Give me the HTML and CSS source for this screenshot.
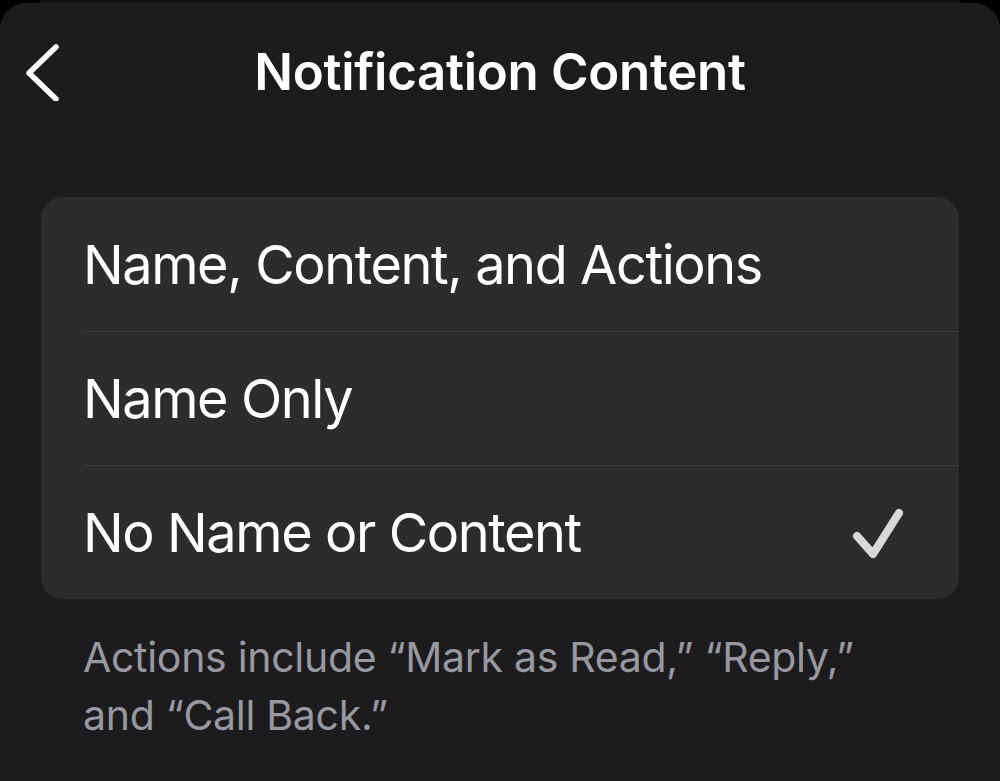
FILE: index.html
```html
<!DOCTYPE html>
<html lang="en">
<head>
    <meta charset="UTF-8">
    <meta name="viewport" content="width=device-width, initial-scale=1.0">
    <title>Notification Content</title>
    <link rel="stylesheet" href="styles.css">
</head>
<body>
    <div class="stack"></div>
    <div class="sheet">
        <div class="header">
            <button class="back" aria-label="Back">
                <svg width="40" height="60" viewBox="0 0 40 60">
                    <path d="M33 6 L6 32 L33 58" fill="none" stroke="#fff" stroke-width="5.5" stroke-linecap="round" stroke-linejoin="round"/>
                </svg>
            </button>
            <h1 class="title">Notification Content</h1>
            <div></div>
        </div>

        <div class="group">
            <div class="row">Name, Content, and Actions</div>
            <div class="row">Name Only</div>
            <div class="row selected">
                No Name or Content
                <svg class="check" width="60" height="60" viewBox="0 0 60 60">
                    <path d="M10 33 L26 51 L52 10" fill="none" stroke="#d8d8da" stroke-width="8" stroke-linecap="round" stroke-linejoin="round"/>
                </svg>
            </div>
        </div>

        <p class="footnote">Actions include “Mark as Read,” “Reply,” and “Call Back.”</p>
    </div>
</body>
</html>
```

FILE: styles.css
```css
* {
    box-sizing: border-box;
    padding: 0;
    margin: 0;
}

body {
    font-family: 'Inter', 'Roboto', sans-serif;
    background-color: #000;
    color: #fff;
    overflow: hidden;
}

.stack {
    height: 3px;
    margin: 0 40px;
    background-color: #141415;
}

.sheet {
    background-color: #1c1c1e;
    border-radius: 26px 26px 0 0;
    min-height: 778px;
}

.header {
    display: grid;
    grid-template-columns: 1fr auto 1fr;
    align-items: center;
    height: 136px;
}

.back {
    justify-self: start;
    display: flex;
    margin-left: 23px;
    background: none;
    border: none;
    cursor: pointer;
}

.title {
    font-size: 51px;
    font-weight: 600;
    letter-spacing: -0.3px;
    line-height: 1;
}

.group {
    margin: 58px 41px 0;
    background-color: #2c2c2e;
    border-radius: 22px;
    overflow: hidden;
}

.row {
    display: flex;
    align-items: center;
    justify-content: space-between;
    height: 134px;
    margin-left: 42px;
    padding-right: 52px;
    font-size: 54px;
    letter-spacing: -1.4px;
}

.row + .row {
    border-top: 1.5px solid #3c3c3f;
}

.check {
    display: block;
}

.footnote {
    margin-top: 29px;
    padding: 0 83px;
    font-size: 41px;
    line-height: 58px;
    color: #98989e;
    letter-spacing: -0.3px;
}
```
